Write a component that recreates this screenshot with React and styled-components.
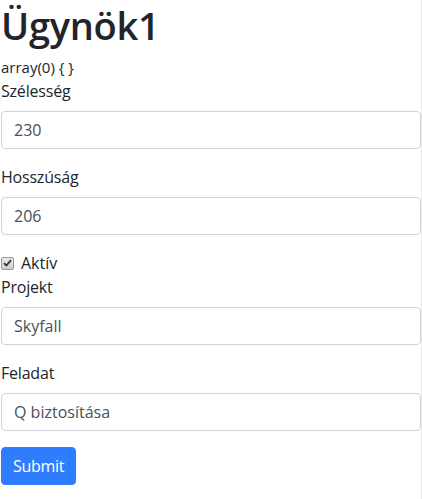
import React from "react";
import styled, { createGlobalStyle } from "styled-components";

const Global = createGlobalStyle`
  html, body { margin: 0; padding: 0; background: #fff; }
  body {
    font-family: "Open Sans", "Noto Sans", "Liberation Sans", sans-serif;
    font-size: 16px;
    line-height: 1.5;
    color: #212529;
  }
  * { box-sizing: border-box; }
`;

const Page = styled.div`
  width: 422px;
  min-height: 499px;
  padding-left: 1px;
  border-right: 1px solid #ececec;
`;

const Title = styled.h1`
  margin: 0 0 7px;
  padding-top: 3px;
  font-size: 38px;
  font-weight: 600;
  line-height: 45px;
  letter-spacing: -0.3px;
`;

const Dump = styled.div`
  font-size: 15px;
  line-height: 24px;
`;

const Form = styled.form`
  display: flex;
  flex-direction: column;
`;

const Group = styled.div`
  display: flex;
  flex-direction: column;
  margin-bottom: ${(p) => (p.$tight ? "0" : "16px")};
`;

const Label = styled.label`
  display: block;
  margin-bottom: 8px;
  line-height: 24px;
  letter-spacing: -0.2px;
`;

const Input = styled.input`
  display: block;
  width: 100%;
  height: 38px;
  padding: 6px 12px;
  font: inherit;
  font-size: 16px;
  line-height: 1.5;
  color: #495057;
  background: #fff;
  border: 1px solid #ced4da;
  border-radius: 4px;
  outline: none;
`;

const CheckRow = styled.label`
  display: flex;
  align-items: center;
  gap: 7px;
  line-height: 24px;
`;

const CheckBox = styled.span`
  display: inline-flex;
  align-items: center;
  justify-content: center;
  width: 13px;
  height: 13px;
  border: 1px solid #9a9a9a;
  border-radius: 2px;
  background: linear-gradient(#e9e9e9, #cfcfcf);
`;

const Button = styled.button`
  align-self: flex-start;
  height: 38px;
  padding: 6px 11px;
  font: inherit;
  font-size: 16px;
  line-height: 1.5;
  letter-spacing: -0.3px;
  color: #fff;
  background: #2f7dff;
  border: 1px solid #2f7dff;
  border-radius: 4px;
`;

export default function App() {
  return (
    <Page>
      <Global />
      <Title>Ügynök1</Title>
      <Dump>array(0) {"{ }"}</Dump>
      <Form onSubmit={(e) => e.preventDefault()}>
        <Group>
          <Label>Szélesség</Label>
          <Input defaultValue="230" />
        </Group>
        <Group>
          <Label>Hosszúság</Label>
          <Input defaultValue="206" />
        </Group>
        <Group $tight>
          <CheckRow>
            <CheckBox>
              <svg width="9" height="8" viewBox="0 0 9 8">
                <path d="M1 4.2 L3.4 6.5 L8 1.2" fill="none" stroke="#333" strokeWidth="1.8" />
              </svg>
            </CheckBox>
            Aktív
          </CheckRow>
        </Group>
        <Group>
          <Label>Projekt</Label>
          <Input defaultValue="Skyfall" />
        </Group>
        <Group>
          <Label>Feladat</Label>
          <Input defaultValue="Q biztosítása" />
        </Group>
        <Button type="submit">Submit</Button>
      </Form>
    </Page>
  );
}
